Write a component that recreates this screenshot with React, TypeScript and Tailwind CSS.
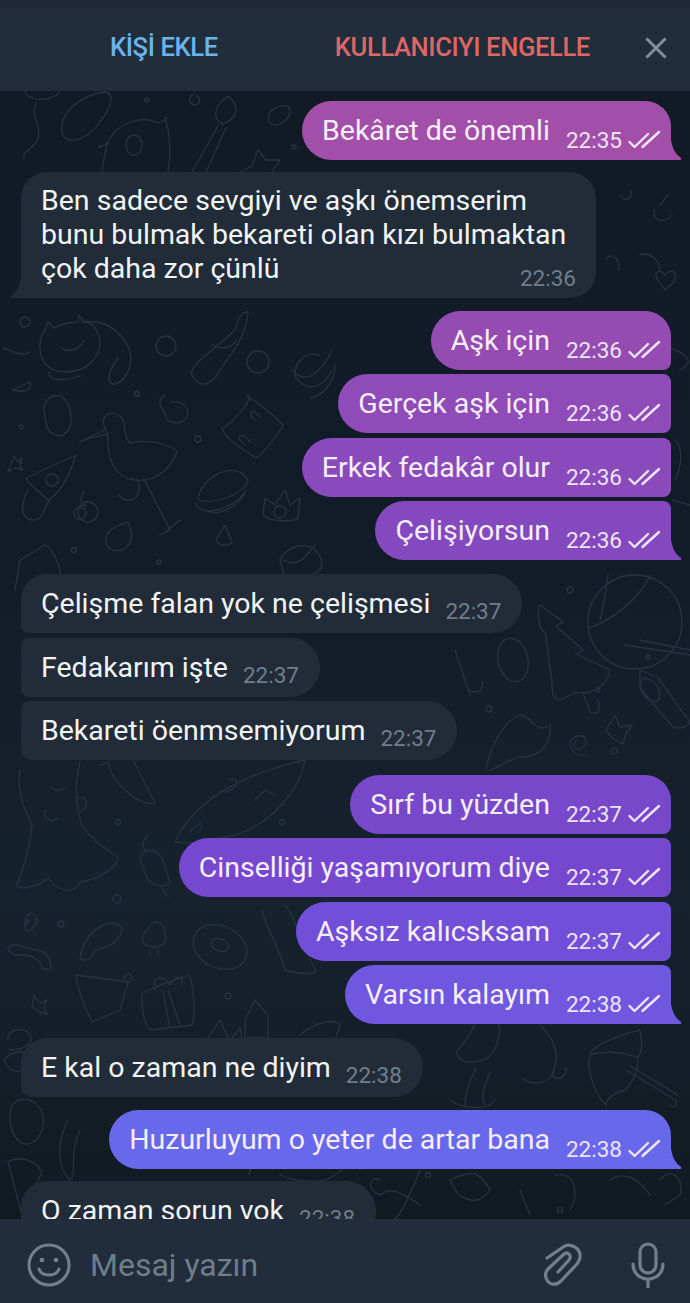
const FONT = "font-['Roboto',sans-serif]";

type Msg = {
  text: string;
  time: string;
  mt: string;
  bg: string;
  fill: string;
  corners: string;
  tail?: boolean;
};

const rows: (Msg & { out: boolean })[] = [
  { out: true, text: "Bekâret de önemli", time: "22:35", mt: "mt-0", bg: "bg-[#a24fa9]", fill: "fill-[#a24fa9]", corners: "rounded-tr-[26px] rounded-br-none", tail: true },
  { out: false, text: "", time: "22:36", mt: "mt-[12px]", bg: "", fill: "", corners: "" },
  { out: true, text: "Aşk için", time: "22:36", mt: "mt-[13px]", bg: "bg-[#944cb3]", fill: "", corners: "rounded-tr-[26px] rounded-br-[8px]" },
  { out: true, text: "Gerçek aşk için", time: "22:36", mt: "mt-[4px]", bg: "bg-[#8f4bb7]", fill: "", corners: "rounded-r-[8px]" },
  { out: true, text: "Erkek fedakâr olur", time: "22:36", mt: "mt-[5px]", bg: "bg-[#894abb]", fill: "", corners: "rounded-r-[8px]" },
  { out: true, text: "Çelişiyorsun", time: "22:36", mt: "mt-[4px]", bg: "bg-[#8449bf]", fill: "fill-[#8449bf]", corners: "rounded-tr-[8px] rounded-br-none", tail: true },
  { out: false, text: "Çelişme falan yok ne çelişmesi", time: "22:37", mt: "mt-[14px]", bg: "bg-[#212c38]", fill: "", corners: "rounded-tl-[26px] rounded-bl-[8px]" },
  { out: false, text: "Fedakarım işte", time: "22:37", mt: "mt-[5px]", bg: "bg-[#212c38]", fill: "", corners: "rounded-l-[8px]" },
  { out: false, text: "Bekareti öenmsemiyorum", time: "22:37", mt: "mt-[4px]", bg: "bg-[#212c38]", fill: "", corners: "rounded-tl-[8px] rounded-bl-[10px]" },
  { out: true, text: "Sırf bu yüzden", time: "22:37", mt: "mt-[15px]", bg: "bg-[#7848ca]", fill: "", corners: "rounded-tr-[26px] rounded-br-[8px]" },
  { out: true, text: "Cinselliği yaşamıyorum diye", time: "22:37", mt: "mt-[4px]", bg: "bg-[#7548cf]", fill: "", corners: "rounded-r-[8px]" },
  { out: true, text: "Aşksız kalıcsksam", time: "22:37", mt: "mt-[5px]", bg: "bg-[#724fd8]", fill: "", corners: "rounded-r-[8px]" },
  { out: true, text: "Varsın kalayım", time: "22:38", mt: "mt-[4px]", bg: "bg-[#6f57df]", fill: "fill-[#6f57df]", corners: "rounded-tr-[8px] rounded-br-none", tail: true },
  { out: false, text: "E kal o zaman ne diyim", time: "22:38", mt: "mt-[14px]", bg: "bg-[#212c38]", fill: "", corners: "rounded-tl-[26px] rounded-bl-[10px]" },
  { out: true, text: "Huzurluyum o yeter de artar bana", time: "22:38", mt: "mt-[13px]", bg: "bg-[#6868ea]", fill: "fill-[#6868ea]", corners: "rounded-tr-[26px] rounded-br-none", tail: true },
  { out: false, text: "O zaman sorun vok", time: "22:38", mt: "mt-[12px]", bg: "bg-[#212c38]", fill: "", corners: "rounded-tl-[26px] rounded-bl-[10px]" },
];

function Checks() {
  return (
    <svg width="34" height="20" viewBox="0 0 34 20" fill="none" className="ml-[5px] shrink-0 stroke-[#f1e6f6]" strokeWidth="2.4" strokeLinecap="round" strokeLinejoin="round" aria-hidden>
      <path d="M2.5 12 L7.5 17 L21 4" />
      <path d="M15.5 17 L32 2" />
    </svg>
  );
}

function OutTail({ fill }: { fill: string }) {
  return (
    <svg width="12" height="28" viewBox="0 0 12 28" className={`absolute bottom-0 right-[-11px] ${fill}`} aria-hidden>
      <path d="M0 0 C1 13 4 21 10.5 25.5 C12 26.6 11.6 28 10 28 L0 28 Z" />
    </svg>
  );
}

function InTail() {
  return (
    <svg width="12" height="28" viewBox="0 0 12 28" className="absolute bottom-0 left-[-11px] fill-[#212c38]" aria-hidden>
      <path d="M12 0 C11 13 8 21 1.5 25.5 C0 26.6 0.4 28 2 28 L12 28 Z" />
    </svg>
  );
}

function Doodles() {
  return (
    <svg viewBox="0 91 690 1128" className="absolute inset-0 h-full w-full" fill="none" stroke="#263441" strokeWidth="1.3" strokeLinecap="round" strokeLinejoin="round" aria-hidden>
      {/* top strip */}
      <path d="M25 92 C30 102 50 102 60 92 M36 103 C30 116 42 125 38 138 C34 150 22 150 24 158" />
      <path d="M62 130 C60 110 85 94 105 92 C115 94 112 106 100 122 C92 134 78 142 70 140 C64 139 62 135 62 130" />
      <path d="M100 145 C96 150 104 146 108 142 C115 125 140 115 155 122 C165 124 170 115 165 118 C172 140 170 160 168 172 M108 142 C104 155 103 165 102 172" />
      <ellipse cx="134" cy="145" rx="8" ry="10" />
      <path d="M228 96 C214 106 212 118 222 124 C236 120 242 108 228 96 M218 126 L192 172 M226 128 L206 172" />
      <path d="M276 108 C268 110 266 120 272 124 C278 128 290 120 290 110 C289 104 280 105 276 108" />
      <path d="M194 94 C188 96 188 104 195 105 C201 104 201 96 196 96" />
      <circle cx="147" cy="100" r="2" /><circle cx="294" cy="147" r="2" />
      <path d="M258 150 L252 166 L240 172 M258 150 L266 160 L280 160 L272 172" />
      {/* cat and friends */}
      <path d="M40 348 C38 336 48 328 48 322 L54 328 C62 324 72 322 78 322 L79 315 L84 322 C92 322 100 330 100 345 C98 360 85 372 65 372 C50 372 40 362 40 348" />
      <path d="M84 322 C110 318 130 340 131 358 C130 375 120 385 112 384 C105 380 112 365 118 358 M50 372 C46 380 60 382 80 376" />
      <path d="M62 348 C66 352 78 352 84 340" />
      <circle cx="166" cy="346" r="10" /><circle cx="25" cy="322" r="5" />
      <path d="M3 348 C12 350 22 358 30 352 M12 390 L30 382 C32 392 24 392 12 390" />
      <path d="M44 410 C44 394 62 390 68 404 C74 420 72 432 60 436 C46 434 46 425 44 410" />
      <path d="M248 312 C240 312 238 320 235 330 C215 350 188 365 192 375 C200 390 212 385 220 370 C230 355 240 345 246 325 Z M212 345 C222 350 232 348 236 340" />
      <circle cx="258" cy="362" r="11" /><circle cx="137" cy="394" r="2.5" /><circle cx="21" cy="427" r="2" />
      <path d="M320 355 C300 350 292 370 296 378 C310 395 325 385 332 370 M292 370 C305 385 320 375 332 350 M310 398 C325 395 335 380 335 365" />
      <path d="M165 395 C154 402 164 412 165 412 C165 425 180 425 186 418 C192 408 180 400 172 402" />
      <path d="M225 427 C240 415 255 395 247 396 C262 405 285 425 283 426 C270 445 262 455 256 458 C245 450 225 440 222 428 Z" />
      <path d="M255 420 C247 415 250 405 260 417 M245 445 C235 440 240 428 250 442" />
      {/* stork, pizza, burger */}
      <path d="M104 425 C100 412 118 408 124 422 C126 440 128 445 135 442 C160 440 175 448 177 452 C168 475 150 482 135 480 C115 478 108 460 108 440 C108 432 105 430 104 425" />
      <path d="M104 430 L80 442 C88 438 100 436 108 434 M145 481 L170 530 M138 480 C142 495 135 502 125 500 L118 495 M168 530 L180 520 M170 530 L160 535" />
      <path d="M26 478 L76 455 C68 480 58 495 48 500 L28 482 Z" />
      <circle cx="52" cy="480" r="6" />
      <path d="M28 490 C20 505 20 520 34 520 C44 520 44 505 50 500" />
      <path d="M14 456 L18 462 L22 458 L20 466 L23 470 L15 468 L8 472 L11 464 Z" />
      <circle cx="88" cy="512" r="10" /><circle cx="80" cy="513" r="6" />
      <path d="M84 492 C78 500 82 508 86 505" />
      <path d="M198 500 C200 475 240 458 248 482 C240 495 215 505 198 500 M195 503 C200 518 235 510 246 490 M204 510 C220 518 240 505 246 490" />
      <path d="M265 498 L263 515 C270 522 295 522 298 518 L300 498 L290 505 L285 490 L275 505 Z" />
      <circle cx="280" cy="512" r="6" />
      <path d="M106 540 C106 528 120 525 128 522 C134 535 132 545 122 550 C112 552 106 548 106 540" />
      <path d="M225 525 L216 540 C220 548 230 546 232 542 Z" />
      <path d="M20 560 L45 545 C56 550 62 575 60 580 M20 560 L15 590" />
      <circle cx="74" cy="550" r="2.5" /><circle cx="159" cy="562" r="2" /><circle cx="198" cy="439" r="3" />
      <path d="M280 560 C290 540 320 540 322 565 C320 575 300 580 284 575 Z M283 560 C298 568 305 558 315 545" />
      {/* right side shapes */}
      <path d="M540 605 L563 622 L556 626 L583 650 L576 654 L610 670 C608 686 590 696 577 692 L560 700 C552 700 552 690 552 680 C548 660 547 640 545 632 C538 630 537 610 540 605 Z" />
      <path d="M583 693 L590 712 C600 716 600 708 598 700" />
      <ellipse cx="513" cy="660" rx="15" ry="22" transform="rotate(-12 513 660)" />
      <circle cx="635" cy="622" r="47" />
      <path d="M590 628 C610 620 640 600 650 575 M600 620 C605 600 606 590 608 575 M625 645 L690 655 M640 640 L690 650" />
      <path d="M640 670 L658 678 L690 722 C685 730 675 728 672 726 L640 688 Z" />
      <ellipse cx="650" cy="690" rx="8" ry="13" transform="rotate(-35 650 690)" />
      <path d="M615 716 L620 727 L632 725 L626 734 L623 744 L612 738 L606 730 Z" />
      <path d="M576 741 C570 745 578 755 585 745 C590 735 575 732 570 742 C570 750 575 756 585 755" />
      <circle cx="489" cy="709" r="3" /><circle cx="614" cy="751" r="3" /><circle cx="648" cy="657" r="2" /><circle cx="598" cy="690" r="2" /><circle cx="570" cy="590" r="3" />
      <path d="M486 770 C490 745 505 720 520 715 C532 715 535 735 550 725 C552 745 540 755 525 757 C515 755 505 765 490 770" />
      <path d="M470 695 L455 650 M470 690 C475 695 485 690 482 682" />
      <path d="M680 370 C700 360 680 350 660 345 M640 255 C650 250 660 262 660 270" />
      <path d="M655 210 C650 220 665 225 672 215 M660 205 L668 195" />
      <path d="M658 280 C652 272 660 268 665 275 C670 268 680 272 674 282 L665 290 Z" />
      <path d="M620 195 C625 205 635 195 630 190 M605 260 C612 250 622 262 618 270" />
      <path d="M675 440 C685 450 680 470 675 480 M672 500 L690 505" />
      {/* lower left */}
      <path d="M20 770 C16 790 24 810 32 825 C30 850 20 880 16 885 C22 892 40 885 48 878 C60 895 78 892 80 882 C100 880 118 865 118 858 C110 850 95 845 82 825 C75 805 75 780 80 762" />
      <path d="M46 810 C40 815 50 825 58 818 M78 798 C88 795 90 808 80 812 M52 788 C56 792 62 790 66 788" />
      <path d="M100 765 L108 762 C112 785 142 808 155 803 L138 770 L133 760" />
      <path d="M175 842 C195 800 240 775 305 760 C300 790 270 825 235 835 C210 840 190 845 175 842 Z" />
      <path d="M230 780 C240 775 240 790 225 792 M190 832 C198 822 205 820 200 830 M255 800 L265 790 L275 795" />
      <circle cx="118" cy="822" r="2.5" /><circle cx="282" cy="822" r="2.5" /><circle cx="117" cy="899" r="4" /><circle cx="61" cy="924" r="3" />
      <path d="M145 850 C140 842 146 840 147 835 M140 860 C140 850 155 845 163 860 L170 882 C165 890 155 885 148 880 Z M162 888 L168 897" />
      <path d="M30 920 C22 922 24 940 35 925 C42 915 25 905 25 925" />
      <path d="M8 948 C15 940 30 950 35 950 C50 950 52 965 50 970 L42 968 C40 958 30 955 22 955 C10 955 8 950 8 948 Z" />
      <path d="M80 958 C85 930 110 915 122 928 C120 945 105 948 95 950 C92 960 84 962 80 958" />
      <path d="M148 930 C150 920 165 918 165 935 C170 945 155 950 145 945 C140 940 143 932 148 930 M150 950 L150 955 M158 950 L158 955" />
      <ellipse cx="220" cy="947" rx="28" ry="21" transform="rotate(25 220 947)" />
      <ellipse cx="220" cy="945" rx="9" ry="6" transform="rotate(25 220 945)" />
      <path d="M262 910 C265 925 280 950 285 970 C305 975 315 975 316 970 C300 945 295 915 285 905" />
      <path d="M128 982 L76 975 C76 985 84 1005 92 1022 L120 1010 Z" />
      <path d="M142 995 C142 990 190 975 190 975 C195 995 195 1015 192 1025 L150 1030 C142 1020 142 1005 142 995 Z" />
      <path d="M155 990 C150 975 165 975 170 985 C175 975 185 975 182 985 M163 992 L170 1028 M168 990 L180 1025" />
      <circle cx="128" cy="978" r="4" /><circle cx="228" cy="996" r="3" />
      <path d="M34 995 L39 1003 L47 1000 L44 1007 L47 1014 L39 1012 L32 1007 Z" />
      <path d="M245 1020 L255 1000 L268 1015 L268 1038 L245 1038 Z" />
      <path d="M208 1038 L220 1020 L228 1038 M232 1038 L240 1028 L242 1038" />
      <path d="M300 1035 C315 1022 335 1018 340 1025 L335 1040" />
      <path d="M8 1040 C5 1030 25 1025 30 1035 C35 1045 20 1050 10 1050" />
      <path d="M4 1060 C12 1050 30 1048 30 1060 C24 1075 10 1075 4 1060" />
      <path d="M462 1046 C452 1050 458 1062 470 1062 C482 1062 495 1062 500 1030 C498 1015 478 1012 472 1030 C470 1035 465 1040 462 1046" />
      <path d="M476 1068 C470 1080 465 1095 465 1105 M490 1072 C485 1085 480 1095 485 1105 M450 1100 C465 1110 490 1110 495 1100" />
      <path d="M540 1025 C560 1045 558 1060 552 1075 C545 1085 530 1085 522 1078 M552 1075 C560 1085 570 1070 565 1068" />
      <path d="M640 1030 C620 1035 592 1045 590 1055 C585 1075 600 1100 606 1105 M590 1055 C605 1050 625 1052 638 1058 M638 1058 C645 1045 640 1035 640 1030 M625 1090 C615 1092 605 1100 606 1105 M625 1090 C635 1080 638 1070 638 1058" />
      <path d="M626 1070 L672 1098 C680 1103 675 1110 670 1105 M630 1066 L678 1095" />
      {/* bottom strip */}
      <path d="M10 1112 C12 1095 35 1095 42 1112 C48 1135 30 1150 20 1142 C12 1135 9 1125 10 1112" />
      <path d="M68 1120 C58 1140 55 1165 70 1180 C78 1175 68 1155 80 1130" />
      <path d="M8 1162 C20 1155 35 1160 42 1172 L22 1215 L8 1162 Z" />
      <path d="M280 1175 C290 1180 330 1190 345 1165 C350 1158 355 1148 360 1170 M420 1170 C410 1195 400 1215 395 1219" />
      <path d="M380 1195 C392 1185 405 1195 420 1205 M450 1180 C470 1170 480 1170 490 1190 C480 1205 460 1205 450 1180" />
      <path d="M610 1180 C625 1170 640 1180 650 1195 M660 1180 C672 1165 685 1180 680 1195 L665 1205" />
      <path d="M380 1180 C370 1175 365 1190 380 1195 M520 1190 L530 1215 M555 1175 C575 1170 580 1195 570 1210" />
      <circle cx="428" cy="1175" r="2.5" /><circle cx="560" cy="1210" r="2.5" />
      <path d="M280 1135 C262 1145 245 1175 250 1175" />
    </svg>
  );
}

export default function App() {
  return (
    <div className={`flex h-[1303px] w-[690px] flex-col overflow-hidden bg-[#212d3b] ${FONT}`}>
      <header className="flex h-[91px] shrink-0 items-center border-t-[8px] border-[#1e2935] bg-[#212d3b] pb-[4px] pl-[110px] pr-[23px]">
        <span className="text-[25.6px] font-medium tracking-[-0.4px] text-[#6ab4ee]">KİŞİ EKLE</span>
        <span className="ml-[117px] text-[25.6px] font-medium tracking-[-0.4px] text-[#dd6666]">KULLANICIYI ENGELLE</span>
        <svg width="22" height="22" viewBox="0 0 22 22" className="ml-auto stroke-[#80909e]" strokeWidth="3" aria-hidden>
          <path d="M1.5 1.5 L20.5 20.5 M20.5 1.5 L1.5 20.5" />
        </svg>
      </header>

      <main className="relative min-h-0 flex-1 overflow-hidden bg-[linear-gradient(180deg,#111a25_0%,#121c28_40%,#17222f_72%,#111a21_100%)]">
        <Doodles />
        <div className="relative flex flex-col pt-[10px]">
          {rows.map((m, i) =>
            i === 1 ? (
              <div key={i} className={`relative ml-[21px] w-[575px] rounded-r-[26px] rounded-tl-[26px] bg-[#212c38] pb-[7px] pl-[20px] pr-[20px] pt-[12px] ${m.mt}`}>
                <InTail />
                <p className="text-[28.5px] leading-[34px] text-[#f2f4f6]">
                  Ben sadece sevgiyi ve aşkı önemserim
                  <br />
                  bunu bulmak bekareti olan kızı bulmaktan
                  <br />
                  çok daha zor çünlü
                </p>
                <p className="-mt-[21px] text-right text-[22.5px] leading-[26px] text-[#6f7e8c]">{m.time}</p>
              </div>
            ) : m.out ? (
              <div key={i} className={`relative mr-[19px] flex h-[59px] items-center self-end rounded-l-[30px] pl-[20px] pr-[10px] ${m.bg} ${m.corners} ${m.mt}`}>
                {m.tail ? <OutTail fill={m.fill} /> : null}
                <span className="mt-[1px] text-[28.5px] leading-[34px] text-[#f6eef9]">{m.text}</span>
                <span className="ml-[16px] mt-[18px] text-[22.5px] leading-[26px] text-[#efe4f4]">{m.time}</span>
                <span className="mt-[18px]"><Checks /></span>
              </div>
            ) : (
              <div key={i} className={`relative ml-[21px] flex h-[59px] shrink-0 items-center self-start rounded-r-[30px] pl-[20px] pr-[21px] ${m.bg} ${m.corners} ${m.mt}`}>
                <span className="mt-[1px] text-[28.5px] leading-[34px] text-[#f2f4f6]">{m.text}</span>
                <span className="ml-[15px] mt-[15px] text-[22.5px] leading-[26px] text-[#6f7e8c]">{m.time}</span>
              </div>
            ),
          )}
        </div>
      </main>

      <footer className="flex h-[84px] shrink-0 items-center bg-[#212d3b] pl-[27px] pr-[25px] pt-[8px]">
        <svg width="44" height="44" viewBox="0 0 44 44" fill="none" className="shrink-0 stroke-[#71808d]" strokeWidth="3" strokeLinecap="round" aria-hidden>
          <circle cx="22" cy="22" r="20" />
          <path d="M12 26 C15 34 29 34 32 26" />
          <circle cx="15" cy="17" r="1.6" className="fill-[#71808d]" strokeWidth="1.5" />
          <circle cx="29" cy="17" r="1.6" className="fill-[#71808d]" strokeWidth="1.5" />
        </svg>
        <span className="ml-[19px] text-[32px] leading-none text-[#6d7d8b]">Mesaj yazın</span>
        <svg width="40" height="44" viewBox="0 0 40 44" fill="none" className="ml-auto shrink-0 stroke-[#71808d]" strokeWidth="3.2" strokeLinecap="round" strokeLinejoin="round" aria-hidden>
          <path d="M3 15 L20 3.5 C26 -0.5 37 5 36 14 C36 17 34 19 33 21 L17 38 C12 43 5 42 2.5 36 C0.5 32 2 28 5 25 L20 11 C24 8 28 13 25 17 L14 29" />
        </svg>
        <svg width="34" height="46" viewBox="0 0 34 46" fill="none" className="ml-[47px] shrink-0 stroke-[#71808d]" strokeWidth="3.2" strokeLinecap="round" aria-hidden>
          <rect x="9" y="2" width="16" height="29" rx="8" />
          <path d="M2 22 C2 42 32 42 32 22 M17 37 L17 45" />
        </svg>
      </footer>
    </div>
  );
}
